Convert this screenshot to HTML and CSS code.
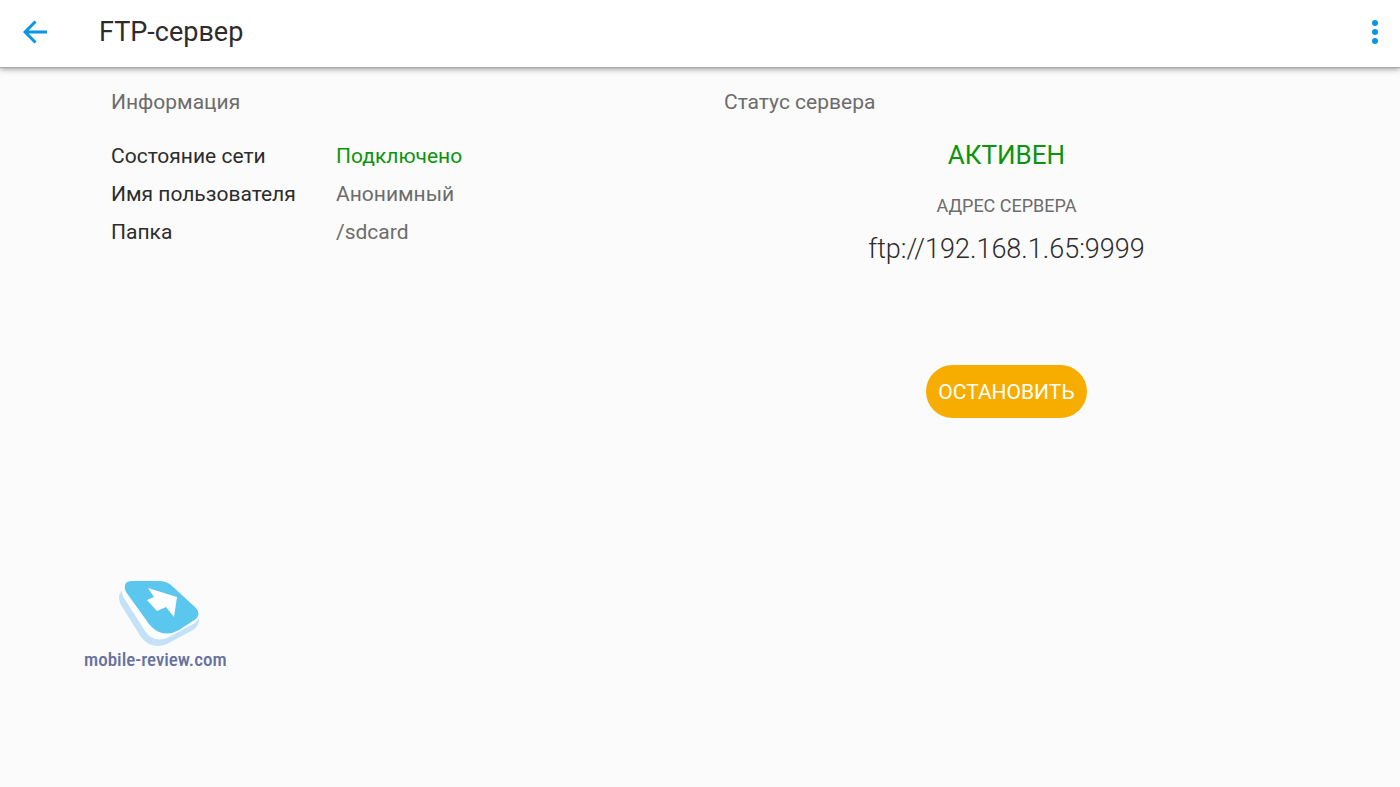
FILE: index.html
```html
<!doctype html>
<html lang="ru">
<head>
<meta charset="UTF-8">
<meta name="viewport" content="width=device-width, initial-scale=1">
<title>FTP-сервер</title>
<link rel="stylesheet" href="styles.css">
</head>
<body>
<header class="toolbar">
  <button class="icon-button" type="button" aria-label="Назад">
    <svg width="24" height="24" viewBox="0 0 24 24" fill="none" stroke="currentColor" stroke-width="3"><path d="M24 12H2M12.500 1.500L2 12l10.500 10.500"/></svg>
  </button>
  <h1>FTP-сервер</h1>
  <button class="icon-button menu" type="button" aria-label="Меню">
    <svg width="6" height="24" viewBox="0 0 6 24" fill="currentColor"><circle cx="3" cy="3" r="3"/><circle cx="3" cy="12" r="3"/><circle cx="3" cy="21" r="3"/></svg>
  </button>
</header>

<main class="content">
  <section class="column">
    <h2>Информация</h2>
    <dl class="info">
      <dt>Состояние сети</dt>
      <dd class="ok">Подключено</dd>
      <dt>Имя пользователя</dt>
      <dd>Анонимный</dd>
      <dt>Папка</dt>
      <dd>/sdcard</dd>
    </dl>
  </section>
  <section class="column">
    <h2>Статус сервера</h2>
    <div class="status">
      <p class="state ok">АКТИВЕН</p>
      <p class="caption">АДРЕС СЕРВЕРА</p>
      <p class="address">ftp://192.168.1.65:9999</p>
      <button class="stop" type="button">ОСТАНОВИТЬ</button>
    </div>
  </section>
</main>

<footer class="logo">
  <svg width="84" height="68" viewBox="0 0 84 68">
    <path fill="#c3e1f7" d="M4 12Q0 17 4 25L24 57Q34 70 50 64L76 50Q83 45 82 36L60 22L10 4Z"/>
    <path fill="#fff" d="M7 5Q3 11 7 18L28 51Q36 63 50 58L78 43Q84 38 82 32L60 10L14 1Z"/>
    <path fill="#5bc6ee" d="M14 1H42Q49 1 54 5L79 28Q84 34 79 39L62 50Q52 56 42 52Q37 50 32 44L9 12Q5 2 14 1Z"/>
    <path fill="#fff" d="M31 8L60 17L57 37L49 27L40 31L30 20L37 17Z"/>
  </svg>
  <span>mobile-review.com</span>
</footer>
</body>
</html>
```
FILE: styles.css
```css
* {
  box-sizing: border-box;
}

body {
  margin: 0;
  min-height: 100vh;
  display: flex;
  flex-direction: column;
  background: #fbfbfb;
  color: #2c2c2c;
  font-family: Roboto, sans-serif;
  font-size: 21px;
}

h1, h2, p, dl, dd {
  margin: 0;
  font-weight: 400;
}

button {
  border: 0;
  padding: 0;
  font: inherit;
  cursor: pointer;
}

.toolbar {
  display: flex;
  align-items: center;
  height: 67px;
  padding: 0 22px 4px 23px;
  background: #fff;
  box-shadow: 0 1px 1px #aaa, 0 2px 6px rgba(0, 0, 0, 0.4);
}

.toolbar h1 {
  margin-left: 52px;
  font-size: 27px;
  line-height: 32px;
}

.icon-button {
  display: flex;
  justify-content: center;
  background: none;
  color: #0796e6;
}

.menu {
  margin-left: auto;
}

.content {
  display: grid;
  grid-template-columns: 1fr 1fr;
  padding: 20px 87px 0;
}

.column {
  padding: 0 24px;
}

h2 {
  color: #6c6c6c;
  font-size: 21px;
  line-height: 30px;
}

.info {
  display: grid;
  grid-template-columns: 225px 1fr;
  row-gap: 8px;
  margin-top: 24px;
  line-height: 30px;
}

.info dd {
  color: #6c6c6c;
}

.info .ok, .ok {
  color: #0c940c;
}

.status {
  display: flex;
  flex-direction: column;
  align-items: center;
  padding-top: 20px;
}

.state {
  font-size: 26px;
  line-height: 36px;
}

.caption {
  margin-top: 20px;
  color: #6c6c6c;
  font-size: 18px;
  line-height: 26px;
}

.address {
  margin-top: 12px;
  font-size: 27px;
  font-weight: 300;
  line-height: 36px;
}

.stop {
  height: 53px;
  margin-top: 98px;
  padding: 0 12px;
  border-radius: 27px;
  background: #f7ad00;
  color: #fff;
}

.logo {
  display: flex;
  flex-direction: column;
  align-items: flex-start;
  margin: auto 0 115px 84px;
  color: #66729f;
  font-family: "Roboto Condensed", "Liberation Sans Narrow", sans-serif;
  font-size: 19px;
  font-weight: 500;
  line-height: 24px;
}

.logo svg {
  margin-left: 33px;
}
```
